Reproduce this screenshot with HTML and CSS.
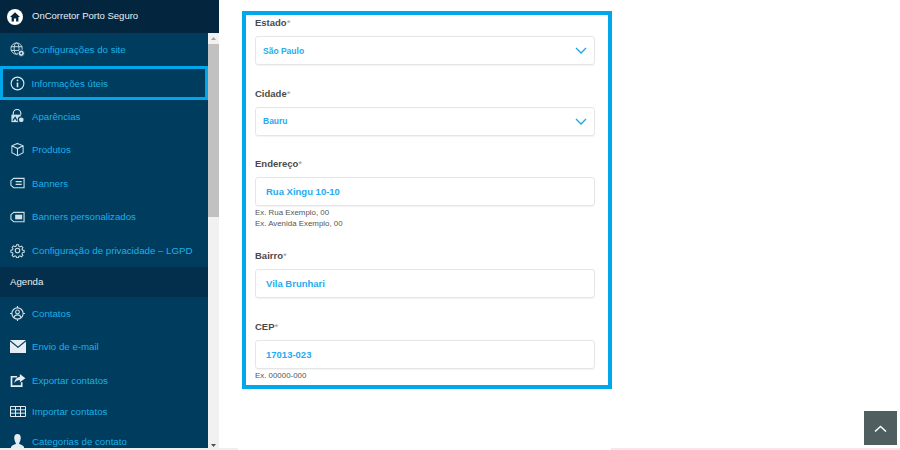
FILE: index.html
```html
<!DOCTYPE html>
<html lang="pt-BR">
<head>
  <meta charset="UTF-8" />
  <title>OnCorretor Porto Seguro</title>
  <link rel="stylesheet" href="styles.css">
</head>
<body>

<aside class="sidebar">
  <div class="site-bar">
    <svg class="home-icon" viewBox="0 0 16 16">
      <circle cx="8" cy="8" r="8" fill="#fff"/>
      <path d="M8 3.200 3 8h1.600v4.400h2.300V9.600h2.200v2.800h2.300V8H13z" fill="#03263e"/>
    </svg>
    <span>OnCorretor Porto Seguro</span>
  </div>

  <div class="menu-wrap">
    <nav class="menu">
      <a class="menu-item">
        <svg class="icon" viewBox="0 0 16 16" fill="none" stroke="#cfe0e8">
          <circle cx="7" cy="7" r="6"/><ellipse cx="7" cy="7" rx="2.600" ry="6"/><path d="M1 5h12M1 9h12"/>
          <circle cx="12" cy="12" r="3.400" fill="#cfe0e8" stroke="#003c5e"/><circle cx="12" cy="12" r="1" fill="#003c5e" stroke="none"/>
        </svg>
        Configurações do site
      </a>
      <a class="menu-item active">
        <svg class="icon" viewBox="0 0 16 16" fill="none" stroke="#dce8ee" stroke-width="1.200">
          <circle cx="8" cy="8" r="6.800"/><path d="M8 7v5" stroke-width="1.700"/><circle cx="8" cy="4.600" r="1" fill="#dce8ee" stroke="none"/>
        </svg>
        Informações úteis
      </a>
      <a class="menu-item">
        <svg class="icon" viewBox="0 0 16 16" fill="none" stroke="#cfe0e8" stroke-width="1.300">
          <path d="M3.500 6V4.500a4 4 0 0 1 8 0V6"/><rect x="1.500" y="6" width="10" height="8" fill="#cfe0e8" stroke="none"/>
          <path d="M3 12.500 5.500 9l2 3.500" stroke="#003c5e"/>
          <circle cx="12" cy="11.500" r="3.200" fill="#cfe0e8" stroke="#003c5e"/>
        </svg>
        Aparências
      </a>
      <a class="menu-item">
        <svg class="icon" viewBox="0 0 16 16" fill="none" stroke="#cfe0e8" stroke-width="1.100">
          <path d="M8 1.500 14 4v7.500L8 14.500 2 11.500V4zM2 4l6 3 6-3M8 7v7.500"/>
        </svg>
        Produtos
      </a>
      <a class="menu-item">
        <svg class="icon icon-wide" viewBox="0 0 16 12" fill="none" stroke="#cfe0e8" stroke-width="1.200">
          <path d="M4 1h11v10H4L1 8.500v-5z"/><path d="M6 4.500h6.500M6 7.500h6.500"/>
        </svg>
        Banners
      </a>
      <a class="menu-item">
        <svg class="icon icon-wide" viewBox="0 0 16 12" fill="none" stroke="#cfe0e8" stroke-width="1.200">
          <path d="M4 1h11v10H4L1 8.500v-5z"/><rect x="5.500" y="3.500" width="7.500" height="5" fill="#cfe0e8" stroke="none"/>
        </svg>
        Banners personalizados
      </a>
      <a class="menu-item">
        <svg class="icon" viewBox="0 0 16 16" fill="none" stroke="#cfe0e8" stroke-width="1.200">
          <circle cx="8" cy="8" r="2.400"/>
          <path d="M6.800 1.200h2.400l.4 2 1.300.6 1.800-1.100 1.700 1.700-1.100 1.800.6 1.300 2 .4v2.400l-2 .4-.6 1.300 1.100 1.800-1.700 1.700-1.800-1.100-1.300.6-.4 1.500H6.800l-.4-1.500-1.300-.6-1.800 1.100-1.700-1.700 1.100-1.800-.6-1.300-1.900-.4V7.600l1.900-.4.6-1.300-1.100-1.800 1.700-1.700 1.800 1.100 1.300-.6z" transform="translate(.8 .8) scale(.9)"/>
        </svg>
        Configuração de privacidade – LGPD
      </a>

      <div class="menu-title">Agenda</div>

      <a class="menu-item">
        <svg class="icon" viewBox="0 0 16 16" fill="none" stroke="#cfe0e8" stroke-width="1.200">
          <circle cx="8" cy="8" r="6"/><circle cx="8" cy="6.300" r="2"/><path d="M4.200 12.400c.6-2.200 1.900-3 3.800-3s3.200.8 3.800 3M8 0v2M8 14v2M0 8h2M14 8h2"/>
        </svg>
        Contatos
      </a>
      <a class="menu-item">
        <svg class="icon icon-mail" viewBox="0 0 16 13">
          <path d="M0 0h16L8 6.500z" fill="#e4edf1"/><path d="M0 1.500V13h16V1.500L8 8z" fill="#e4edf1"/>
        </svg>
        Envio de e-mail
      </a>
      <a class="menu-item">
        <svg class="icon icon-mail" viewBox="0 0 16 14" fill="none">
          <path d="M7 3H1v10h11V9" stroke="#e4edf1" stroke-width="1.800"/>
          <path d="M10 0l6 4.500-6 4.500V6.500C7.500 6.500 5.500 7.500 4 10c.3-4 2.500-6.500 6-7z" fill="#e4edf1"/>
        </svg>
        Exportar contatos
      </a>
      <a class="menu-item menu-item-short">
        <svg class="icon icon-mail" viewBox="0 0 16 11" fill="none" stroke="#e4edf1">
          <path d="M.5.500h15v10H.5zM.5 3.800h15M.5 7.200h15M5.500.5v10M10.500.5v10"/>
        </svg>
        Importar contatos
      </a>
      <a class="menu-item menu-item-last">
        <svg class="icon" viewBox="0 0 16 16">
          <path d="M8 0c2.300 0 3.500 1.800 3.500 4S10.300 9 9.800 9.500v1.200c2 .7 4.700 1.500 5.200 3.300v2H1v-2c.5-1.800 3.200-2.600 5.200-3.300V9.500C5.700 9 4.500 6.200 4.500 4S5.700 0 8 0z" fill="#e4edf1"/>
        </svg>
        Categorias de contato
      </a>
    </nav>

    <div class="scrollbar">
      <svg class="arrow" viewBox="0 0 7 4"><path d="M3.500 0 7 4H0z" fill="#a3a3a3"/></svg>
      <div class="thumb"></div>
      <svg class="arrow arrow-down" viewBox="0 0 7 4"><path d="M0 0h7L3.500 4z" fill="#505050"/></svg>
    </div>
  </div>
</aside>

<main class="content">
  <form class="address-box">
    <div class="field">
      <label>Estado<span class="req">*</span></label>
      <div class="input select">
        <span>São Paulo</span>
        <svg class="chevron" viewBox="0 0 12 7"><path d="M1 1l5 5 5-5" fill="none" stroke="#1ba6e6" stroke-width="1.300"/></svg>
      </div>
    </div>
    <div class="field">
      <label>Cidade<span class="req">*</span></label>
      <div class="input select">
        <span>Bauru</span>
        <svg class="chevron" viewBox="0 0 12 7"><path d="M1 1l5 5 5-5" fill="none" stroke="#1ba6e6" stroke-width="1.300"/></svg>
      </div>
    </div>
    <div class="field field-hint">
      <label>Endereço<span class="req">*</span></label>
      <div class="input">Rua Xingu 10-10</div>
      <p class="hint">Ex. Rua Exemplo, 00<br>Ex. Avenida Exemplo, 00</p>
    </div>
    <div class="field">
      <label>Bairro<span class="req">*</span></label>
      <div class="input">Vila Brunhari</div>
    </div>
    <div class="field field-hint">
      <label>CEP<span class="req">*</span></label>
      <div class="input">17013-023</div>
      <p class="hint">Ex. 00000-000</p>
    </div>
  </form>
</main>

<a class="back-top">
  <svg viewBox="0 0 13 7"><path d="M1 6.500l5.500-5 5.500 5" fill="none" stroke="#fff" stroke-width="1.500"/></svg>
</a>
<div class="bottom-edge bottom-edge-left"></div>
<div class="bottom-edge bottom-edge-right"></div>

</body>
</html>
```

FILE: styles.css
```css
body {
  margin: 0;
  display: flex;
  align-items: flex-start;
  height: 450px;
  overflow: hidden;
  background: #fff;
  color: #444;
  font-family: "Liberation Sans", Arial, sans-serif;
}

.sidebar {
  width: 219px;
  height: 448px;
  flex-shrink: 0;
  display: flex;
  flex-direction: column;
  background: #003c5e;
}

.site-bar {
  height: 33px;
  display: flex;
  align-items: center;
  gap: 9px;
  padding-left: 7px;
  padding-bottom: 2px;
  box-sizing: border-box;
  background: #03263e;
  color: #e8eef2;
  font-size: 9.500px;
}

.home-icon {
  width: 16px;
  height: 16px;
  margin-top: 2px;
}

.menu-wrap {
  flex: 1;
  display: flex;
  min-height: 0;
}

.menu {
  flex: 1;
  overflow: hidden;
}

.menu-item {
  height: 33.400px;
  display: flex;
  align-items: center;
  gap: 7px;
  padding-left: 10px;
  box-sizing: border-box;
  color: #1cb0e8;
  font-size: 9.700px;
}

.menu-item.active {
  border: 3.500px solid #00a7ea;
  padding-left: 6.500px;
}

.menu-item-short {
  height: 29px;
}

.menu-item-last {
  height: 31px;
}

.icon {
  width: 15px;
  height: 15px;
  flex-shrink: 0;
}

.icon-wide {
  height: 12px;
}

.icon-mail {
  width: 16px;
  height: 13px;
  margin-right: -1px;
}

.menu-title {
  height: 30px;
  display: flex;
  align-items: center;
  padding-left: 10px;
  background: #032f4d;
  color: #e8eef2;
  font-size: 9.700px;
}

.scrollbar {
  width: 11px;
  display: flex;
  flex-direction: column;
  align-items: center;
  background: #f1f1f1;
}

.arrow {
  width: 5px;
  height: 3px;
  margin: 4px 0;
  flex-shrink: 0;
}

.thumb {
  width: 100%;
  height: 173px;
  background: #c1c1c1;
}

.arrow-down {
  margin-top: auto;
  margin-bottom: 1px;
}

.content {
  flex: 1;
  padding: 11px 0 0 23px;
}

.address-box {
  width: 362px;
  height: 370px;
  border: 4px solid #00a7ea;
}

.field {
  padding: 0 13px 0 9px;
  margin-bottom: 20.500px;
}

.field-hint {
  margin-bottom: 19px;
}

.field label {
  display: block;
  height: 21px;
  box-sizing: border-box;
  padding-top: 2px;
  color: #4a4a4a;
  font-size: 9.500px;
  font-weight: 700;
  line-height: 12px;
}

.req {
  color: #999;
  font-weight: 400;
}

.input {
  height: 29px;
  display: flex;
  align-items: center;
  justify-content: space-between;
  padding: 0 10px;
  box-sizing: border-box;
  border: 1px solid #e6e6e6;
  border-radius: 3px;
  box-shadow: 0 1px 1px rgba(0,0,0,0.05);
  color: #25abf0;
  font-size: 9.500px;
  font-weight: 700;
}

.select {
  padding: 0 7px;
  font-size: 8.500px;
}

.chevron {
  width: 12px;
  height: 7px;
  flex-shrink: 0;
}

.hint {
  margin: 1px 0 0;
  color: #555;
  font-size: 7.900px;
  line-height: 11px;
}

.back-top {
  position: fixed;
  right: 3px;
  bottom: 5px;
  width: 33px;
  height: 34px;
  display: flex;
  align-items: center;
  justify-content: center;
  background: #4f5f60;
}

.back-top svg {
  width: 13px;
  height: 7px;
}

.bottom-edge {
  position: fixed;
  bottom: 0;
  height: 2px;
}

.bottom-edge-left {
  left: 0;
  width: 238px;
  background: #efefef;
}

.bottom-edge-right {
  left: 611px;
  right: 0;
  background: #f8e4ea;
}
```
